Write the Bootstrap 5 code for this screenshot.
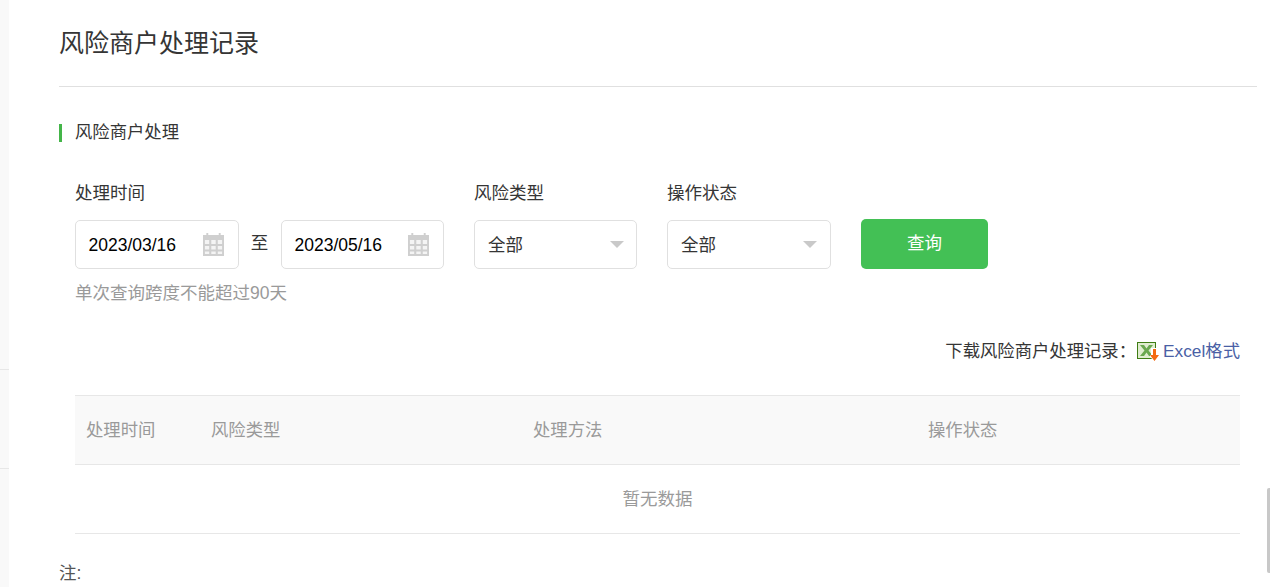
<!DOCTYPE html>
<html lang="zh-CN">
<head>
  <meta charset="UTF-8">
  <meta name="viewport" content="width=device-width, initial-scale=1.0">
  <title>风险商户处理记录</title>
  <link href="https://cdn.jsdelivr.net/npm/bootstrap@5.3.0/dist/css/bootstrap.min.css" rel="stylesheet">
  <style>
    html, body {
      height: 587px;
      overflow: hidden;
    }
    body {
      background: #fff;
      color: #353535;
      font-family: "Liberation Sans", "Noto Sans CJK SC", sans-serif;
      font-size: 17.5px;
      line-height: 24px;
    }
    .side-rail {
      width: 9px;
      height: 587px;
      background: #f9f9f9;
      flex-shrink: 0;
      padding-top: 369px;
    }
    .side-rail div {
      height: 100px;
      border-top: 1px solid #e7e7e7;
      border-bottom: 1px solid #e7e7e7;
    }
    .main-area {
      width: 1198px;
      margin-left: 50px;
    }
    .page-title {
      height: 87px;
      margin: 0;
      padding-top: 27px;
      border-bottom: 1px solid #e0e0e0;
      font-size: 25px;
      line-height: 32px;
      font-weight: 400;
    }
    .section-title {
      margin-top: 37px;
      height: 18px;
      padding-left: 13px;
      border-left: 3px solid #44b549;
      font-size: 17.33px;
      line-height: 16px;
    }
    .query-form {
      margin: 39px 0 0 16px;
      width: 1165px;
    }
    .field-label {
      height: 24px;
      margin-bottom: 15px;
    }
    .date-box, .pick-box {
      height: 49px;
      border: 1px solid #e0e0e0;
      border-radius: 5px;
      background: #fff;
      padding: 0 13px;
    }
    .date-box {
      width: 164px;
      padding-left: 12.5px;
      color: #000;
    }
    .date-box.second {
      width: 163px;
    }
    .date-box svg {
      margin-right: 1px;
    }
    .pick-box {
      width: 163px;
    }
    .pick-box.wider {
      width: 164px;
    }
    .caret-down {
      width: 0;
      height: 0;
      margin-right: -1px;
      border-left: 7px solid transparent;
      border-right: 7px solid transparent;
      border-top: 7px solid #c9c9c9;
    }
    .wider .caret-down {
      margin-right: 0;
    }
    .date-sep {
      width: 42px;
      padding-bottom: 3px;
      padding-right: 1px;
      text-align: center;
    }
    .filter-col {
      margin-left: 30px;
    }
    .btn-col {
      margin-left: 30px;
      padding-top: 39px;
    }
    .search-btn {
      width: 127px;
      height: 50px;
      margin-top: -1px;
      padding: 0 0 2px;
      border: 0;
      border-radius: 5px;
      background: #43c055;
      color: #fff;
      font-size: 17.5px;
    }
    .search-btn:hover {
      background: #3bb04c;
      color: #fff;
    }
    .form-hint {
      margin-top: 12px;
      color: #9a9a9a;
    }
    .export-row {
      margin-top: 34px;
      height: 24px;
      font-size: 17.33px;
    }
    .export-row a {
      color: #4a5fa5;
      text-decoration: none;
    }
    .export-row svg {
      margin: 0 4px 0 1px;
    }
    .record-table {
      margin: 32px 0 0;
      table-layout: fixed;
      border-top: 1px solid #e7e7e7;
    }
    .record-table th {
      height: 69px;
      padding: 0 0 0 11px;
      background: #f9f9f9;
      border-bottom: 1px solid #e7e7e7;
      color: #9a9a9a;
      font-size: 17.33px;
      font-weight: 400;
      vertical-align: middle;
    }
    .record-table td {
      height: 69px;
      padding: 0;
      border-bottom: 1px solid #e7e7e7;
      color: #9a9a9a;
      text-align: center;
      vertical-align: middle;
    }
    .note-line {
      margin-top: 27px;
      color: #555;
    }
    .scroll-thumb {
      position: absolute;
      top: 488px;
      right: 0;
      width: 3px;
      height: 85px;
      background: #c8c8c8;
      border-radius: 2px 0 0 2px;
    }
  </style>
</head>
<body>

  <div class="d-flex">
    <div class="side-rail"><div></div></div>

    <div class="main-area">
      <h1 class="page-title">风险商户处理记录</h1>
      <div class="section-title">风险商户处理</div>

      <div class="query-form">
        <div class="d-flex align-items-start">
          <div>
            <div class="field-label">处理时间</div>
            <div class="d-flex align-items-center">
              <div class="date-box d-flex align-items-center justify-content-between">
                <span>2023/03/16</span>
                <svg width="21" height="23" viewBox="0 0 22 23" preserveAspectRatio="none">
                  <path fill="#cfcfcf" d="M0 2h3.500V0h2v2h11V0h2v2H22v21H0z"/>
                  <path fill="#f4f4f4" d="M2 7h4.500v4H2zM8.700 7h4.600v4H8.700zM15.500 7H20v4h-4.500zM2 13h4.500v3.500H2zM8.700 13h4.600v3.500H8.700zM15.500 13H20v3.500h-4.500zM2 18.500h4.500V21H2zM8.700 18.500h4.600V21H8.700zM15.500 18.500H20V21h-4.500z"/>
                </svg>
              </div>
              <div class="date-sep">至</div>
              <div class="date-box second d-flex align-items-center justify-content-between">
                <span>2023/05/16</span>
                <svg width="21" height="23" viewBox="0 0 22 23" preserveAspectRatio="none">
                  <path fill="#cfcfcf" d="M0 2h3.500V0h2v2h11V0h2v2H22v21H0z"/>
                  <path fill="#f4f4f4" d="M2 7h4.500v4H2zM8.700 7h4.600v4H8.700zM15.500 7H20v4h-4.500zM2 13h4.500v3.500H2zM8.700 13h4.600v3.500H8.700zM15.500 13H20v3.500h-4.500zM2 18.500h4.500V21H2zM8.700 18.500h4.600V21H8.700zM15.500 18.500H20V21h-4.500z"/>
                </svg>
              </div>
            </div>
          </div>

          <div class="filter-col">
            <div class="field-label">风险类型</div>
            <div class="pick-box d-flex align-items-center justify-content-between">
              <span>全部</span><span class="caret-down"></span>
            </div>
          </div>

          <div class="filter-col">
            <div class="field-label">操作状态</div>
            <div class="pick-box wider d-flex align-items-center justify-content-between">
              <span>全部</span><span class="caret-down"></span>
            </div>
          </div>

          <div class="btn-col">
            <button type="button" class="btn search-btn">查询</button>
          </div>
        </div>

        <div class="form-hint">单次查询跨度不能超过90天</div>

        <div class="export-row d-flex justify-content-end align-items-center">
          <span>下载风险商户处理记录：</span>
          <svg width="22" height="19" viewBox="0 0 22 19">
            <rect x="0.500" y="0.500" width="18" height="16" fill="#dfeccf" stroke="#3f7d14"/>
            <path fill="#6aa84f" d="M3 3h4l2.500 3.500L12 3h4l-4.500 5.500L16 14h-4l-2.500-3.500L7 14H3l4.500-5.500z"/>
            <path fill="#fff" d="M14 6h6v7h2v2l-4.500 4-4.500-4v-2h1z"/>
            <path fill="#f46a12" d="M16 7h3v6h3l-4.500 6-4.500-6h3z"/>
          </svg>
          <a href="#">Excel格式</a>
        </div>

        <table class="table record-table">
          <colgroup>
            <col style="width:125px">
            <col style="width:322px">
            <col style="width:395px">
            <col>
          </colgroup>
          <thead>
            <tr>
              <th>处理时间</th>
              <th>风险类型</th>
              <th>处理方法</th>
              <th>操作状态</th>
            </tr>
          </thead>
          <tbody>
            <tr><td colspan="4">暂无数据</td></tr>
          </tbody>
        </table>
      </div>

      <div class="note-line">注:</div>
    </div>
  </div>

  <div class="scroll-thumb"></div>

  <script src="https://cdn.jsdelivr.net/npm/bootstrap@5.3.0/dist/js/bootstrap.bundle.min.js"></script>
</body>
</html>
